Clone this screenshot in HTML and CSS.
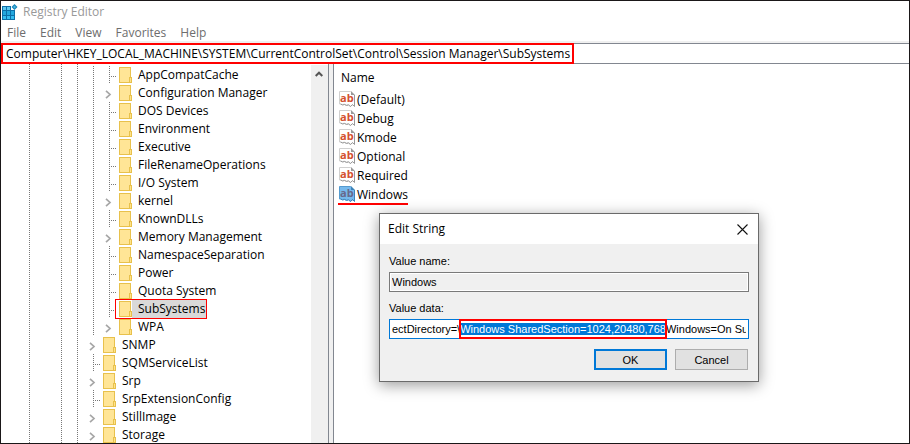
FILE: index.html
```html
<!DOCTYPE html>
<html lang="en">
<head>
<meta charset="utf-8">
<title>Registry Editor</title>
<link rel="stylesheet" href="styles.css">
</head>
<body>
<svg class="defs" aria-hidden="true">
  <symbol id="folder" viewBox="0 0 13 16">
    <path d="M0 0h12v10h1v6H0z" fill="#e8c14c"/>
    <path d="M1 1h10v9h-1v5H1z" fill="#ffe596"/>
    <path d="M11 11h1v4h-1z" fill="#ffe38a"/>
  </symbol>
  <symbol id="chevron" viewBox="0 0 7 9">
    <path d="M1 .8 5 4.5 1 8.2" fill="none" stroke="#a6a6a6" stroke-width="1.7"/>
  </symbol>
  <symbol id="page" viewBox="0 0 16 16">
    <path class="sheet" d="M.5.5h11l4 4v10.500l-2-1-2 1.200-2-1.700-2 .5-2-.8-2 .3-2-.5H.5z"/>
    <path class="edge" d="M15.500 4v11.500l-2-2-2 2-2-1.500-2 .5-2-1-2 .5-2-1"/>
    <path class="fold" d="M12 0v4h4z"/>
  </symbol>
</svg>
<div class="window">
  <header class="titlebar">
    <svg class="app-icon" viewBox="0 0 16 16" aria-hidden="true">
      <path d="M0 2h9v4h4v10H0z" fill="#0c6fa8"/>
      <path d="M1 3h3v3H1zM5 3h3v3H5z" fill="#5cc8f0"/>
      <path d="M1 7h3v4H1zM5 7h3v4H5zM9 7h3v4H9z" fill="#23a7de"/>
      <path d="M1 12h3v3H1zM5 12h3v3H5zM9 12h3v3H9z" fill="#35bdf0"/>
      <path d="m12.500 0 3 3-3 3-3-3z" fill="#1583b8"/>
      <path d="m12.500 1.500 1.500 1.500-1.500 1.500L11 3z" fill="#48b4dd"/>
    </svg>
    <span>Registry Editor</span>
  </header>
  <nav class="menu">
    <button>File</button><button>Edit</button><button>View</button><button>Favorites</button><button>Help</button>
  </nav>
  <div class="address"><span class="path">Computer\HKEY_LOCAL_MACHINE\SYSTEM\CurrentControlSet\Control\Session Manager\SubSystems</span></div>
  <main class="panes">
    <section class="tree-pane">
      <ul class="tree">
        <li>
          <ul class="branch">
            <li class="key leaf"><svg class="folder"><use href="#folder"/></svg><span>AppCompatCache</span></li>
            <li class="key"><svg class="chevron"><use href="#chevron"/></svg><svg class="folder"><use href="#folder"/></svg><span>Configuration Manager</span></li>
            <li class="key leaf"><svg class="folder"><use href="#folder"/></svg><span>DOS Devices</span></li>
            <li class="key leaf"><svg class="folder"><use href="#folder"/></svg><span>Environment</span></li>
            <li class="key leaf"><svg class="folder"><use href="#folder"/></svg><span>Executive</span></li>
            <li class="key leaf"><svg class="folder"><use href="#folder"/></svg><span>FileRenameOperations</span></li>
            <li class="key leaf"><svg class="folder"><use href="#folder"/></svg><span>I/O System</span></li>
            <li class="key"><svg class="chevron"><use href="#chevron"/></svg><svg class="folder"><use href="#folder"/></svg><span>kernel</span></li>
            <li class="key leaf"><svg class="folder"><use href="#folder"/></svg><span>KnownDLLs</span></li>
            <li class="key"><svg class="chevron"><use href="#chevron"/></svg><svg class="folder"><use href="#folder"/></svg><span>Memory Management</span></li>
            <li class="key leaf"><svg class="folder"><use href="#folder"/></svg><span>NamespaceSeparation</span></li>
            <li class="key leaf"><svg class="folder"><use href="#folder"/></svg><span>Power</span></li>
            <li class="key leaf"><svg class="folder"><use href="#folder"/></svg><span>Quota System</span></li>
            <li class="key leaf selected"><svg class="folder"><use href="#folder"/></svg><span>SubSystems</span></li>
            <li class="key"><svg class="chevron"><use href="#chevron"/></svg><svg class="folder"><use href="#folder"/></svg><span>WPA</span></li>
          </ul>
        </li>
        <li class="key"><svg class="chevron"><use href="#chevron"/></svg><svg class="folder"><use href="#folder"/></svg><span>SNMP</span></li>
        <li class="key leaf"><svg class="folder"><use href="#folder"/></svg><span>SQMServiceList</span></li>
        <li class="key"><svg class="chevron"><use href="#chevron"/></svg><svg class="folder"><use href="#folder"/></svg><span>Srp</span></li>
        <li class="key leaf"><svg class="folder"><use href="#folder"/></svg><span>SrpExtensionConfig</span></li>
        <li class="key"><svg class="chevron"><use href="#chevron"/></svg><svg class="folder"><use href="#folder"/></svg><span>StillImage</span></li>
        <li class="key"><svg class="chevron"><use href="#chevron"/></svg><svg class="folder"><use href="#folder"/></svg><span>Storage</span></li>
      </ul>
      <div class="scrollbar">
        <button aria-label="Scroll up"><svg viewBox="0 0 8 6"><path d="M.7 5 4 1.700 7.300 5" fill="none" stroke="#555" stroke-width="2"/></svg></button>
      </div>
    </section>
    <section class="values-pane">
      <table class="values">
        <thead><tr><th>Name</th></tr></thead>
        <tbody>
          <tr><td><div class="value"><span class="ab"><svg><use href="#page"/></svg><b>ab</b></span><span>(Default)</span></div></td></tr>
          <tr><td><div class="value"><span class="ab"><svg><use href="#page"/></svg><b>ab</b></span><span>Debug</span></div></td></tr>
          <tr><td><div class="value"><span class="ab"><svg><use href="#page"/></svg><b>ab</b></span><span>Kmode</span></div></td></tr>
          <tr><td><div class="value"><span class="ab"><svg><use href="#page"/></svg><b>ab</b></span><span>Optional</span></div></td></tr>
          <tr><td><div class="value"><span class="ab"><svg><use href="#page"/></svg><b>ab</b></span><span>Required</span></div></td></tr>
          <tr><td><div class="value marked"><span class="ab"><svg><use href="#page"/></svg><b>ab</b></span><span>Windows</span></div></td></tr>
        </tbody>
      </table>
    </section>
  </main>
  <form class="dialog" role="dialog" aria-labelledby="dialog-title">
    <div class="dialog-title">
      <span id="dialog-title">Edit String</span>
      <button type="button" class="close" aria-label="Close"><svg viewBox="0 0 11 11"><path d="m.5.5 10 10m0-10-10 10" fill="none" stroke="#111" stroke-width="1.100"/></svg></button>
    </div>
    <div class="dialog-body">
      <label for="value-name">Value name:</label>
      <input id="value-name" type="text" value="Windows" readonly>
      <label for="value-data">Value data:</label>
      <div class="data-field">
        <input id="value-data" type="text" value="ectDirectory=\Windows SharedSection=1024,20480,768Windows=On SubSystemType=Windows">
        <span class="highlight"></span>
      </div>
      <div class="actions">
        <button type="button" class="primary">OK</button>
        <button type="button">Cancel</button>
      </div>
    </div>
  </form>
</div>
<script src="script.js"></script>
</body>
</html>
```
FILE: script.js
```js
const field = document.getElementById("value-data");
const picked = "Windows SharedSection=1024,20480,768";
const start = field.value.indexOf(picked);
field.focus({ preventScroll: true });
field.setSelectionRange(start, start + picked.length);
field.scrollLeft = 0;
```
FILE: styles.css
```css
* { box-sizing: border-box; }
body {
  margin: 0;
  font: 12px/18px "Open Sans", "Noto Sans", sans-serif;
  color: #000;
}
button { font: inherit; color: inherit; background: none; border: 0; padding: 0; }
ul { list-style: none; margin: 0; padding: 0; }
svg { display: block; flex: none; }
.defs { position: absolute; width: 0; height: 0; }

.window {
  position: relative;
  display: flex;
  flex-direction: column;
  height: 100vh;
  overflow: hidden;
  border: 1px solid #1a1718;
  background: #fff;
}
.titlebar {
  display: flex;
  align-items: center;
  gap: 5px;
  height: 22px;
  padding-left: 1px;
  color: #999;
}
.app-icon { width: 16px; height: 16px; }
.menu {
  display: flex;
  gap: 14px;
  height: 18px;
  padding-left: 6px;
  color: #6d6d6d;
}
.menu button { height: 20px; line-height: 20px; }
.address {
  height: 23px;
  border-top: 2px solid #f0f0f0;
  border-bottom: 1px solid #828790;
  box-shadow: inset 0 1px #828790;
  display: flex;
}
.path {
  height: 21px;
  padding: 0 2px 0 3px;
  border: 2px solid #f00;
  line-height: 18px;
  white-space: nowrap;
}

.panes { display: flex; flex: 1; min-height: 0; background: #f0f0f0; gap: 4px; }
.tree-pane {
  display: flex;
  flex: 0 0 328px;
  border-right: 1px solid #828790;
  background: #fff;
  overflow: hidden;
}
.tree, .branch {
  --dots: linear-gradient(#777 1px, transparent 1px);
  background-image: var(--dots), var(--dots), var(--dots);
  background-size: 1px 2px;
  background-repeat: repeat-y;
}
.tree {
  flex: 1;
  align-self: flex-start;
  padding-top: 2px;
  background-position: 28px 0, 60px 0, 76px 0;
}
.branch { background-image: var(--dots); background-position: 92px 0; padding-left: 16px; }
.key {
  display: flex;
  align-items: center;
  height: 18px;
  padding-left: 88px;
}
.key span { padding: 0 3px 0 6px; white-space: nowrap; }
.leaf {
  padding-left: 102px;
  background:
    linear-gradient(#777 1px, transparent 1px) 92px 0 / 1px 2px repeat-y,
    repeating-linear-gradient(90deg, #777 0 1px, transparent 1px 2px) 92px 10px / 8px 1px no-repeat;
}
.folder { width: 13px; height: 16px; }
.chevron { width: 7px; height: 9px; margin: 2px 7px 0 0; }
.selected {
  position: relative;
  z-index: 0;
}
.selected::before {
  content: "";
  position: absolute;
  z-index: -1;
  left: 98px;
  width: 90px;
  height: 18px;
  border: 1px solid #f00;
  background: linear-gradient(90deg, #fff 16px, #d9d9d9 16px);
}
.scrollbar { width: 17px; background: #f0f0f0; margin-top: 1px; }
.scrollbar button { display: flex; width: 16px; height: 18px; justify-content: center; align-items: center; }
.scrollbar svg { width: 8px; height: 6px; }

.values-pane { flex: 1; border-left: 1px solid #828790; background: #fff; }
.values { border-collapse: collapse; }
.values th { height: 26px; padding: 2px 0 0 7px; font-weight: 400; text-align: left; }
.values td { padding: 0 0 0 5px; }
.value { display: flex; align-items: center; gap: 2px; height: 19px; }
.ab { position: relative; width: 16px; height: 16px; margin-bottom: 1px; }
.ab svg { width: 16px; height: 16px; }
.ab b {
  position: absolute;
  inset: 0;
  padding-left: 1px;
  font: 700 11px/13px "Open Sans", sans-serif;
  color: #d4502f;
}
.value { --sheet: #fff; --outline: #d0d0d0; --edge: #999; }
.marked { --sheet: #76b9ed; --outline: #559bd0; --edge: #3d83b8; }
.sheet { fill: var(--sheet); stroke: var(--outline); }
.edge { fill: none; stroke: var(--edge); }
.fold { fill: var(--edge); }
.marked { position: relative; }
.marked::after {
  content: "";
  position: absolute;
  left: -1px;
  right: 0;
  bottom: -1px;
  height: 2px;
  background: #f00;
}
.marked b { color: #67688c; }

.dialog {
  position: absolute;
  left: 378px;
  top: 212px;
  width: 380px;
  border: 1px solid #6a6a6a;
  background: #f0f0f0;
  box-shadow: 0 3px 14px rgba(0, 0, 0, .4);
  font: 11px/14px "Liberation Sans", Arial, sans-serif;
}
.dialog-title {
  display: flex;
  align-items: center;
  justify-content: space-between;
  height: 30px;
  padding: 0 10px 0 8px;
  background: #fff;
  font: 12px/18px "Open Sans", sans-serif;
}
.close svg { width: 11px; height: 11px; }
.dialog-body { display: flex; flex-direction: column; padding: 10px 9px 11px; }
.dialog-body label { height: 18px; line-height: 14px; }
.dialog-body input {
  width: 100%;
  height: 20px;
  padding: 0 2px;
  border: 1px solid #7a7a7a;
  outline: 0;
  font: inherit;
  color: #000;
}
#value-name { margin-bottom: 9px; background: #f0f0f0; box-shadow: inset 0 0 0 1px #fff; }
#value-data { display: block; border-color: #0078d7; background: #fff; }
#value-data::selection { background: #0078d7; color: #fff; }
.data-field { position: relative; }
.highlight {
  position: absolute;
  left: 70px;
  top: 0;
  width: 208px;
  height: 20px;
  border: 2px solid #f00;
  pointer-events: none;
}
.actions { display: flex; justify-content: flex-end; gap: 8px; margin-top: 10px; padding-right: 1px; }
.actions button { width: 73px; height: 21px; border: 1px solid #adadad; background: #e1e1e1; }
.actions .primary { border: 2px solid #0078d7; }
```
